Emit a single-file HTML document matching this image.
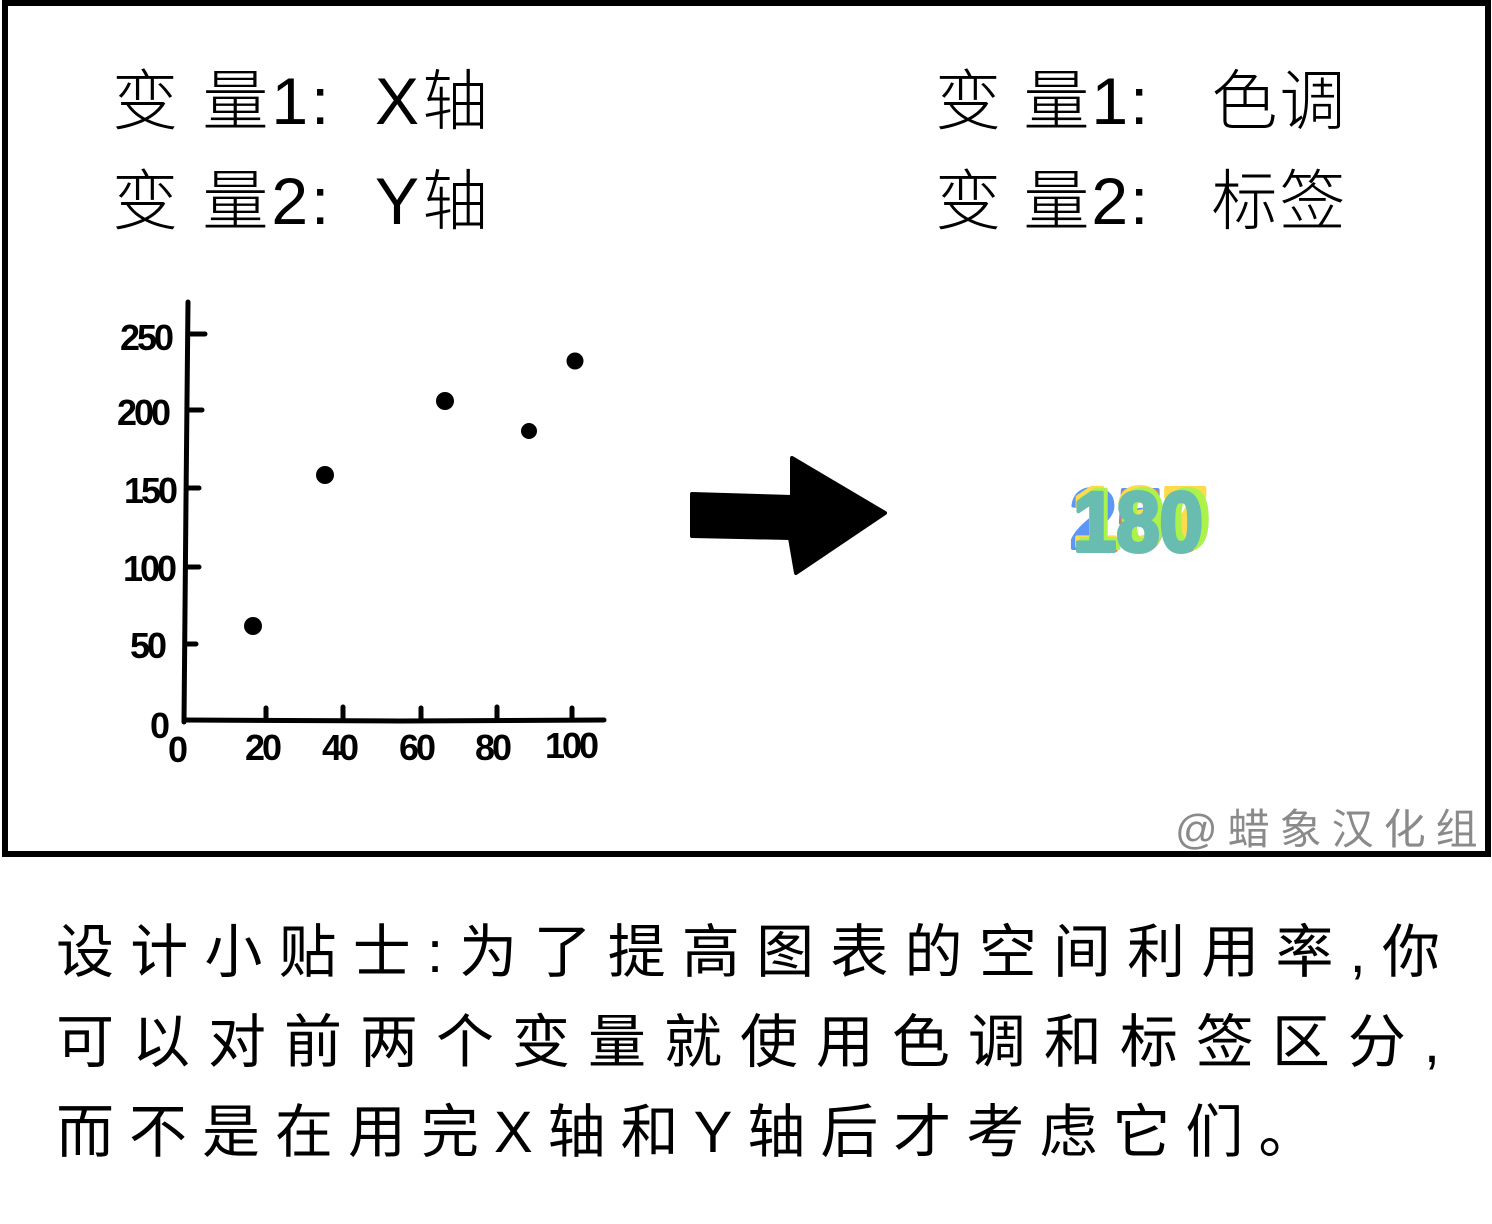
<!DOCTYPE html>
<html><head><meta charset="utf-8">
<style>
html,body{margin:0;padding:0;background:#fff;}
body{width:1492px;height:1224px;position:relative;overflow:hidden;font-family:"Liberation Sans","Noto Sans CJK SC",sans-serif;color:#000;}
.frame{position:absolute;left:2px;top:0;width:1477px;height:845px;border:6px solid #000;}
.t{position:absolute;font-size:66px;line-height:1;white-space:nowrap;font-weight:300;letter-spacing:3px;}
.wm{position:absolute;left:1175px;top:796px;font-size:42px;color:#8a8a8a;letter-spacing:10px;white-space:nowrap;}
.ln{position:absolute;left:56px;width:1384px;font-size:58px;line-height:1;white-space:nowrap;text-align:justify;text-align-last:justify;}
.ln3{text-align:left;text-align-last:auto;letter-spacing:15px;width:auto;}
</style></head><body>
<div class="frame"></div>
<div class="t" style="left:112px;top:68px;">变 量1:&nbsp; X轴</div>
<div class="t" style="left:112px;top:168px;">变 量2:&nbsp; Y轴</div>
<div class="t" style="left:935px;top:68px;letter-spacing:2px;">变 量1:&nbsp; &nbsp;色调</div>
<div class="t" style="left:935px;top:168px;letter-spacing:2px;">变 量2:&nbsp; &nbsp;标签</div>
<svg width="1492" height="860" style="position:absolute;left:0;top:0" font-family="Liberation Sans, sans-serif">
<g stroke="#000" stroke-width="5" stroke-linecap="round" fill="none">
<path d="M188 302 L186 500 L184 722"/>
<path d="M184 720 L400 721 L604 720"/>
<path d="M188 334 L205 334 M188 410 L202 410 M188 488 L199 488 M186 567 L199 567 M186 644 L196 644"/>
<path d="M266 720 L266 708 M343 720 L343 707 M421 720 L421 708 M497 720 L497 707 M572 720 L572 708"/>
</g>
<g fill="#000">
<circle cx="253" cy="626" r="9"/><circle cx="325" cy="475" r="9"/><circle cx="445" cy="401" r="9"/><circle cx="529" cy="431" r="8"/><circle cx="575" cy="361" r="8.5"/>
</g>
<g font-size="36" font-weight="bold" fill="#000" letter-spacing="-3">
<text x="120" y="350">250</text><text x="117" y="425">200</text><text x="124" y="503">150</text><text x="123" y="581">100</text><text x="130" y="658">50</text>
<text x="150" y="738">0</text><text x="168" y="762">0</text><text x="245" y="760">20</text><text x="322" y="760">40</text><text x="399" y="760">60</text><text x="475" y="760">80</text><text x="545" y="758">100</text>
</g>
<path d="M692 494 L792 497 L792 458 L885 513 L796 573 L790 538 L692 536 Z" fill="#000" stroke="#000" stroke-width="4" stroke-linejoin="round"/>
<g font-size="84" font-weight="bold" opacity="0.7" stroke-width="4" stroke-linejoin="round">
<text x="1070" y="548" fill="#1a6cf0" stroke="#1a6cf0" textLength="140" lengthAdjust="spacingAndGlyphs">250</text>
<text x="1074" y="550" fill="#ff3a00" stroke="#ff3a00" textLength="132" lengthAdjust="spacingAndGlyphs">150</text>
<text x="1072" y="546" fill="#ffcc00" stroke="#ffcc00" textLength="136" lengthAdjust="spacingAndGlyphs">137</text>
<text x="1076" y="548" fill="#88ee00" stroke="#88ee00" textLength="134" lengthAdjust="spacingAndGlyphs">100</text>
<text x="1073" y="551" fill="#2aa090" stroke="#2aa090" textLength="130" lengthAdjust="spacingAndGlyphs">180</text>
</g>
</svg>
<div class="wm">@蜡象汉化组</div>
<div class="ln" style="top:924px;">设计小贴士:为了提高图表的空间利用率,你</div>
<div class="ln" style="top:1014px;">可以对前两个变量就使用色调和标签区分,</div>
<div class="ln ln3" style="top:1104px;">而不是在用完X轴和Y轴后才考虑它们。</div>
</body></html>
